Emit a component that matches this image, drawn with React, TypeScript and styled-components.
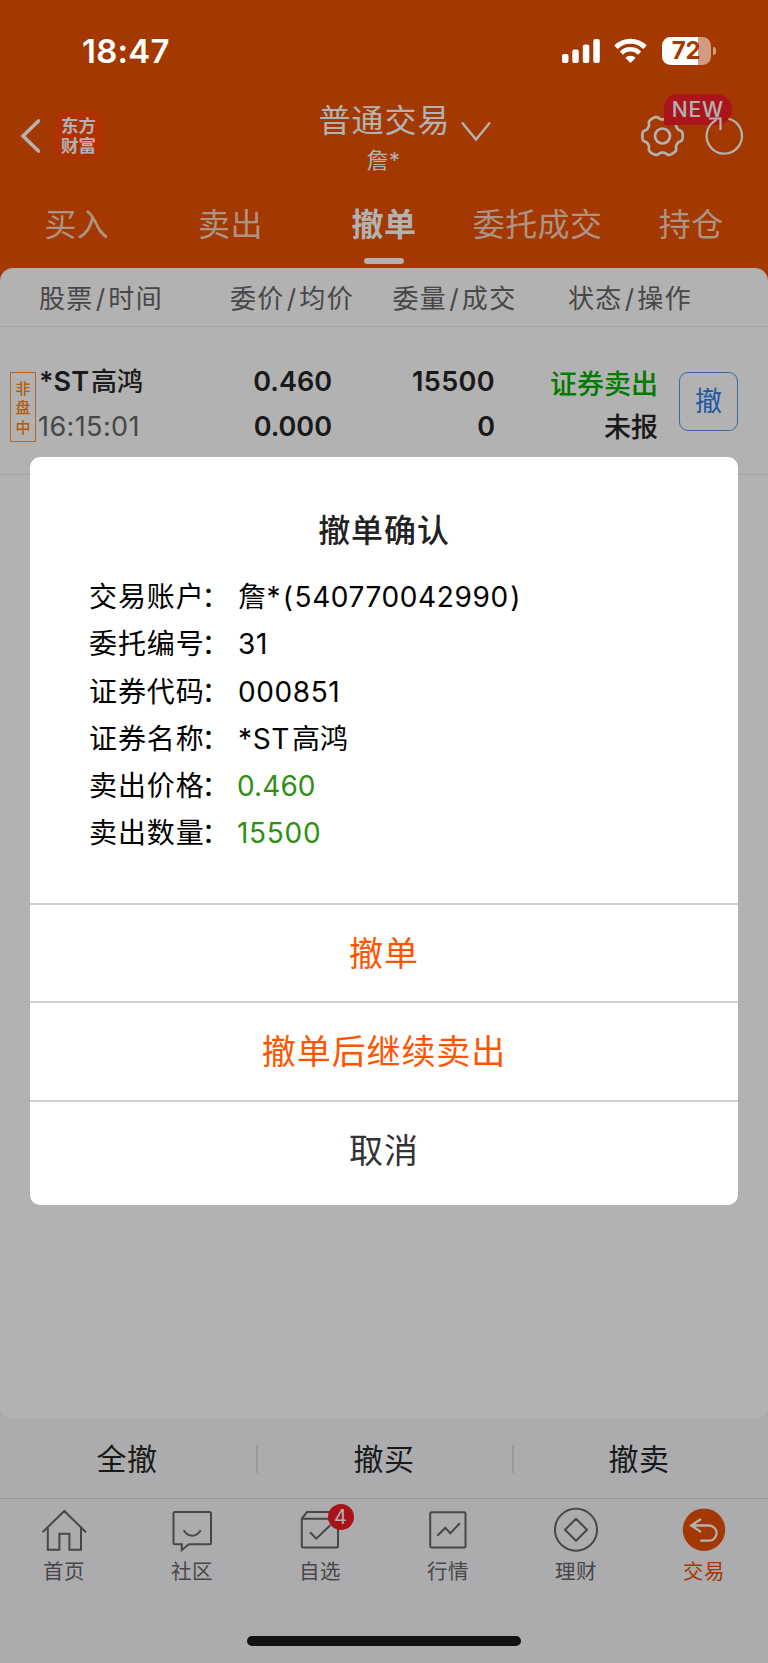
import React from 'react';
import styled, { createGlobalStyle, css } from 'styled-components';

const Global = createGlobalStyle`
  *, *::before, *::after { box-sizing: border-box; }
  html, body { margin: 0; padding: 0; }
  body {
    background: #f7f7fa;
    font-family: Inter, "Noto Sans CJK SC", sans-serif;
    font-feature-settings: "calt" 0;
  }
  button { font: inherit; border: 0; background: none; padding: 0; margin: 0; letter-spacing: inherit; }
`;

const Screen = styled.div`
  position: relative;
  width: 768px;
  height: 1663px;
  overflow: hidden;
  display: flex;
  flex-direction: column;
  background: #ea5100;
`;

const StatusBar = styled.div`
  position: relative;
  z-index: 3;
  height: 90px;
  flex: none;
  display: flex;
  justify-content: space-between;
  padding: 31px 52px 0 82px;
  color: #fff;
`;

const Clock = styled.div`
  font-size: 33px;
  line-height: 41px;
  font-weight: 600;
  letter-spacing: 0.2px;
`;

const StatusIcons = styled.div`
  display: flex;
  align-items: flex-start;
  padding-top: 6px;
  svg { display: block; }
`;

const WifiIcon = styled.svg`
  margin-left: 14px;
`;

const Battery = styled.div`
  width: 49px;
  height: 28px;
  margin-left: 15px;
  border-radius: 8.5px;
  background: linear-gradient(90deg, #fff 0 36px, #d29c80 36px);
  color: #a43900;
  font-size: 24px;
  line-height: 28px;
  font-weight: 700;
  text-align: center;
  letter-spacing: -0.3px;
  text-indent: -1px;
`;

const BatteryNub = styled.div`
  width: 3px;
  height: 8px;
  margin: 10px 0 0 2px;
  border-radius: 0 3px 3px 0;
  background: #d29c80;
`;

const TopBar = styled.header`
  flex: none;
  height: 100px;
  display: grid;
  grid-template-columns: 254px 260px 254px;
  color: #fff;
`;

const TopLeft = styled.div`
  display: flex;
  align-items: flex-start;
  padding: 22px 0 0 19px;
  svg { margin-top: 6px; }
`;

const Logo = styled.div`
  width: 47px;
  height: 47px;
  margin-left: 10px;
  padding-top: 4px;
  border-radius: 9px;
  background: #fb4500;
  font-size: 17.5px;
  line-height: 19.5px;
  font-weight: 700;
  text-align: center;
`;

const TitleBlock = styled.div`
  display: flex;
  flex-direction: column;
  align-items: center;
  padding-top: 11px;
`;

const TitleRow = styled.div`
  display: flex;
  font-size: 32px;
  line-height: 40px;
  letter-spacing: 1px;
  padding-left: 42px;
  svg { margin: 17px 0 0 9px; }
`;

const Subtitle = styled.div`
  font-size: 22px;
  line-height: 26px;
  margin: 5px 1px 0 0;
  letter-spacing: 0.5px;
`;

const TopRight = styled.div`
  position: relative;
  display: flex;
  padding: 22px 0 0 126px;
  svg { flex: none; }
`;

const RefreshIcon = styled.svg`
  position: relative;
  z-index: 1;
  margin-left: 16px;
`;

const NewBadge = styled.span`
  position: absolute;
  left: 149.5px;
  top: 3.5px;
  width: 68.5px;
  height: 31.5px;
  border-radius: 14px 16px 16px 0;
  background: #f41d26;
  font-size: 21px;
  line-height: 31px;
  font-weight: 500;
  letter-spacing: 0.8px;
  text-align: center;
`;

const Tabs = styled.nav`
  flex: none;
  height: 78px;
  display: grid;
  grid-template-columns: repeat(5, 1fr);
`;

const Tab = styled.div<{ $active?: boolean }>`
  display: flex;
  flex-direction: column;
  align-items: center;
  padding-top: 15px;
  font-size: 32px;
  line-height: 40px;
  white-space: nowrap;
  letter-spacing: 0.4px;
  color: ${p => (p.$active ? '#fff' : 'rgba(255,255,255,.75)')};
  font-weight: ${p => (p.$active ? 600 : 400)};
  ${p => p.$active && css`
    &::after {
      content: '';
      width: 40px;
      height: 6px;
      margin-top: 13px;
      border-radius: 3px;
      background: #fff;
    }
  `}
`;

const Body = styled.main`
  flex: 1;
  display: flex;
  flex-direction: column;
  background: linear-gradient(#ea5100 0 300px, #f7f7fa 300px);
`;

const List = styled.section`
  height: 1151px;
  border-radius: 13px;
  background: #fff;
`;

const ListHead = styled.div`
  height: 59px;
  display: grid;
  grid-template-columns: 202px 180px 145px 206px;
  border-bottom: 1px solid #ededed;
  color: #666;
  font-size: 26px;
  line-height: 61px;
  letter-spacing: 1.3px;
  text-align: center;
`;

const Slash = styled.span`
  margin: 0 2px 0 2px;
`;

const Order = styled.div`
  height: 148px;
  display: grid;
  grid-template-columns: 29px 141px 152px 163px 163px auto;
  padding: 32px 0 0 10px;
  border-bottom: 1px solid #ededed;
  color: #262626;
  font-size: 27px;
  line-height: 45px;
`;

const SessionTag = styled.div`
  width: 26px;
  height: 70px;
  margin-top: 13px;
  padding-top: 6px;
  border: 1px solid #ff9438;
  color: #ff8412;
  font-size: 15px;
  line-height: 19.3px;
  font-weight: 500;
  text-align: center;
  span { display: block; }
`;

const Cell = styled.div<{ $right?: boolean; $low?: boolean }>`
  text-align: ${p => (p.$right ? 'right' : 'left')};
  line-height: ${p => (p.$low ? 42.5 : 45)}px;
  padding-top: ${p => (p.$low ? 5 : 0)}px;
  white-space: nowrap;
`;

const Strong = styled.div<{ $green?: boolean; $wide?: boolean }>`
  font-weight: ${p => (p.$green ? 500 : 600)};
  color: ${p => (p.$green ? '#00b000' : 'inherit')};
  letter-spacing: ${p => (p.$wide ? 0.4 : 0)}px;
`;

const HanName = styled.span<{ $medium?: boolean }>`
  margin-left: 2px;
  font-weight: ${p => (p.$medium ? 500 : 400)};
  font-size: ${p => (p.$medium ? '26px' : 'inherit')};
  letter-spacing: 0;
`;

const State = styled.div`
  font-weight: 500;
`;

const Time = styled.div`
  color: #666;
  letter-spacing: 0.4px;
  margin-left: -1px;
`;

const CancelOne = styled.button`
  width: 59px;
  height: 59px;
  margin: 13px 0 0 21px;
  border: 1.5px solid #5295f0;
  border-radius: 9px;
  color: #2b80ee;
  font-size: 27px;
  line-height: 56px;
`;

const Bulk = styled.div`
  height: 80px;
  flex: none;
  display: grid;
  grid-template-columns: 258px 256px 254px;
  align-items: center;
  border-bottom: 1px solid #dcdce0;
`;

const BulkButton = styled.button`
  height: 28px;
  padding-right: 2px;
  border-right: 2px solid #dcdcde;
  color: #262626;
  font-size: 30px;
  line-height: 28px;
  letter-spacing: 0.5px;
  &:last-child { border-right: 0; padding-right: 4px; }
`;

const Nav = styled.nav`
  flex: 1;
  display: grid;
  grid-template-columns: repeat(6, 128px);
  background: #f7f7fa;
`;

const NavItem = styled.div<{ $active?: boolean }>`
  position: relative;
  display: flex;
  flex-direction: column;
  align-items: center;
  padding-top: 5px;
  color: ${p => (p.$active ? '#ea5100' : '#666')};
  font-size: 20.5px;
  line-height: 30px;
  letter-spacing: 0.6px;
  svg { margin-bottom: 5px; flex: none; }
`;

const CountBadge = styled.span`
  position: absolute;
  left: 71.5px;
  top: 5px;
  width: 26px;
  height: 26px;
  border-radius: 50%;
  background: #f21b20;
  color: #fff;
  font-size: 20px;
  line-height: 27px;
  text-align: center;
  letter-spacing: 0;
`;

const HomeIndicator = styled.div`
  position: absolute;
  z-index: 3;
  left: 247px;
  bottom: 17px;
  width: 274px;
  height: 10px;
  border-radius: 5px;
  background: #121212;
`;

const Scrim = styled.div`
  position: absolute;
  inset: 0;
  z-index: 2;
  padding: 457px 30px 0;
  background: rgba(0, 0, 0, 0.3);
`;

const Dialog = styled.div`
  height: 748px;
  border-radius: 10px;
  background: #fff;
  overflow: hidden;
`;

const DialogMain = styled.div`
  height: 446px;
  padding-top: 50px;
`;

const DialogTitle = styled.h1`
  margin: 0;
  font-size: 32px;
  line-height: 48px;
  font-weight: 500;
  letter-spacing: 0.9px;
  text-align: center;
  color: #222;
`;

const Details = styled.dl`
  margin: 18px 0 0;
  padding-left: 59px;
`;

const Detail = styled.div<{ $green?: boolean; $wide?: boolean }>`
  display: flex;
  height: 47.3px;
  font-size: 28px;
  line-height: 48px;
  color: #000;
  dt { width: 149px; letter-spacing: 0.9px; }
  dd {
    margin: 0 0 0 ${p => (p.$green ? -1 : 0)}px;
    letter-spacing: ${p => (p.$green ? (p.$wide ? 0.7 : 0.1) : 0.6)}px;
    color: ${p => (p.$green ? '#2f8f12' : '#000')};
  }
`;

const Colon = styled.span`
  margin-left: -3px;
`;

const Paren = styled.span`
  margin: 0 1px 0 1.5px;
`;

const DialogAction = styled.button<{ $plain?: boolean }>`
  display: block;
  width: 100%;
  height: 98.3px;
  border-top: 2px solid #d0d0d0;
  font-size: 34px;
  line-height: 94px;
  padding-top: ${p => (p.$plain ? 2 : 1)}px;
  letter-spacing: 0.9px;
  text-align: center;
  color: ${p => (p.$plain ? '#333' : '#ff5500')};
`;

const HomeIcon = () => (
  <svg width="48" height="48" fill="none" stroke="currentColor" strokeWidth="2">
    <path d="M2.5 28.3 24.3 7 46 28.3M7.8 24v21.7h11.6v-16h10v16H41V24" />
  </svg>
);

const ChatIcon = () => (
  <svg width="48" height="48" fill="none" stroke="currentColor" strokeWidth="2">
    <path d="M7 8h34.5A1.5 1.5 0 0 1 43 9.5v29.3a1.5 1.5 0 0 1-1.500 1.500H21L13.800 46v-5.700H7a1.500 1.500 0 0 1-1.500-1.500V9.500A1.500 1.500 0 0 1 7 8Z" />
    <path d="M15.700 26.300c4.500 7.300 12.500 7.300 17 0" />
  </svg>
);

const WatchIcon = () => (
  <svg width="48" height="48" fill="none" stroke="currentColor" strokeWidth="2">
    <path d="M5.800 14.700 11 8h26l5 6.700V42a1.500 1.500 0 0 1-1.500 1.500H7.300A1.500 1.500 0 0 1 5.800 42ZM5.800 14.700H42M14 28.300l6.300 6.400L34.500 21" />
  </svg>
);

const QuoteIcon = () => (
  <svg width="48" height="48" fill="none" stroke="currentColor" strokeWidth="2">
    <rect x="6.200" y="8.200" width="35.300" height="35.200" rx="1.500" />
    <path d="m13.300 31.800 8-8 5 5.500 9.500-10" />
  </svg>
);

const WealthIcon = () => (
  <svg width="48" height="48" fill="none" stroke="currentColor" strokeWidth="2">
    <circle cx="24" cy="25.700" r="21" />
    <path d="m24 14.700 11 11-11 11-11-11Z" strokeLinejoin="round" />
  </svg>
);

const TradeIcon = () => (
  <svg width="48" height="48" fill="none">
    <circle cx="24" cy="25.700" r="21.200" fill="#ea5100" />
    <path d="m21 15-9.700 6.500 9.700 6.500M11.500 21.500H29a7.600 7.600 0 0 1 0 15.200h-8.700" stroke="#fff" strokeWidth="2.300" />
  </svg>
);

const columns = [['股票', '时间'], ['委价', '均价'], ['委量', '成交'], ['状态', '操作']];

const details = [
  { label: '交易账户', value: <>詹*<Paren>(</Paren>540770042990<Paren>)</Paren></> },
  { label: '委托编号', value: '31' },
  { label: '证券代码', value: '000851' },
  { label: '证券名称', value: <>*ST<HanName>高鸿</HanName></> },
  { label: '卖出价格', value: '0.460', green: true },
  { label: '卖出数量', value: '15500', green: true, wide: true },
];

const navItems = [
  { label: '首页', Icon: HomeIcon },
  { label: '社区', Icon: ChatIcon },
  { label: '自选', Icon: WatchIcon, count: 4 },
  { label: '行情', Icon: QuoteIcon },
  { label: '理财', Icon: WealthIcon },
  { label: '交易', Icon: TradeIcon, active: true },
];

/* Outline of a six-toothed cog centred on (22.5, 24). */
const gearPath = (() => {
  const pts: string[] = [];
  for (let i = 0; i < 180; i++) {
    const a = (i / 180) * Math.PI * 2;
    const r = 18.3 + 1.9 * Math.tanh(2 * (Math.cos(6 * a) + 0.3));
    pts.push(`${(22.5 + r * Math.cos(a)).toFixed(2)} ${(24 + r * Math.sin(a)).toFixed(2)}`);
  }
  return `M${pts.join('L')}Z`;
})();

export default function App() {
  return (
    <Screen>
      <Global />
      <StatusBar>
        <Clock>18:47</Clock>
        <StatusIcons>
          <svg width="38" height="28" fill="#fff">
            <rect x="0" y="17" width="6.500" height="9" rx="2" />
            <rect x="10.300" y="12.500" width="6.500" height="13.500" rx="2" />
            <rect x="20.800" y="7.500" width="6.500" height="18.500" rx="2" />
            <rect x="31.300" y="2" width="6.500" height="24" rx="2" />
          </svg>
          <WifiIcon width="33" height="28" fill="none" stroke="#fff" strokeWidth="5">
            <path d="M2 10.300a20.500 20.500 0 0 1 29 0" />
            <path d="M7.400 16.100a12.900 12.900 0 0 1 18.200 0" strokeWidth="4.500" />
            <path d="m16.500 26-5.200-5.200a7.400 7.400 0 0 1 10.400 0Z" fill="#fff" stroke="none" />
          </WifiIcon>
          <Battery>72</Battery>
          <BatteryNub />
        </StatusIcons>
      </StatusBar>

      <TopBar>
        <TopLeft>
          <svg width="26" height="36" fill="none" stroke="#fff" strokeWidth="3.600" strokeLinecap="round">
            <path d="M19.500 3 4 18l15.500 15" />
          </svg>
          <Logo>东方<br />财富</Logo>
        </TopLeft>
        <TitleBlock>
          <TitleRow>
            普通交易
            <svg width="32" height="24" fill="none" stroke="#fff" strokeWidth="2.400">
              <path d="m2 4.500 14 17 14-17" />
            </svg>
          </TitleRow>
          <Subtitle>詹*</Subtitle>
        </TitleBlock>
        <TopRight>
          <svg width="46" height="48" fill="none" stroke="#fff">
            <path d={gearPath} strokeWidth="2.700" strokeLinejoin="round" />
            <circle cx="22.500" cy="24" r="7.500" strokeWidth="2.700" />
          </svg>
          <NewBadge>NEW</NewBadge>
          <RefreshIcon width="44" height="48" fill="none" stroke="#fff" strokeWidth="2.200">
            <path d="M26.500 6.700A17.700 17.700 0 1 1 14.500 8M7 6.500h11.500V18" />
          </RefreshIcon>
        </TopRight>
      </TopBar>

      <Tabs>
        <Tab>买入</Tab>
        <Tab>卖出</Tab>
        <Tab $active>撤单</Tab>
        <Tab>委托成交</Tab>
        <Tab>持仓</Tab>
      </Tabs>

      <Body>
        <List>
          <ListHead>
            {columns.map(([a, b]) => (
              <div key={a}>{a}<Slash>/</Slash>{b}</div>
            ))}
          </ListHead>
          <Order>
            <SessionTag><span>非</span><span>盘</span><span>中</span></SessionTag>
            <Cell><Strong>*ST<HanName $medium>高鸿</HanName></Strong><Time>16:15:01</Time></Cell>
            <Cell $right><Strong>0.460</Strong><Strong>0.000</Strong></Cell>
            <Cell $right><Strong $wide>15500</Strong><Strong>0</Strong></Cell>
            <Cell $right $low><Strong $green>证券卖出</Strong><State>未报</State></Cell>
            <CancelOne>撤</CancelOne>
          </Order>
        </List>
        <Bulk>
          <BulkButton>全撤</BulkButton>
          <BulkButton>撤买</BulkButton>
          <BulkButton>撤卖</BulkButton>
        </Bulk>
        <Nav>
          {navItems.map(({ label, Icon, count, active }) => (
            <NavItem key={label} $active={active}>
              <Icon />
              {label}
              {count && <CountBadge>{count}</CountBadge>}
            </NavItem>
          ))}
        </Nav>
      </Body>

      <Scrim>
        <Dialog role="dialog">
          <DialogMain>
            <DialogTitle>撤单确认</DialogTitle>
            <Details>
              {details.map(d => (
                <Detail key={d.label} $green={d.green} $wide={d.wide}>
                  <dt>{d.label}<Colon>：</Colon></dt>
                  <dd>{d.value}</dd>
                </Detail>
              ))}
            </Details>
          </DialogMain>
          <DialogAction>撤单</DialogAction>
          <DialogAction>撤单后继续卖出</DialogAction>
          <DialogAction $plain>取消</DialogAction>
        </Dialog>
      </Scrim>
      <HomeIndicator />
    </Screen>
  );
}
